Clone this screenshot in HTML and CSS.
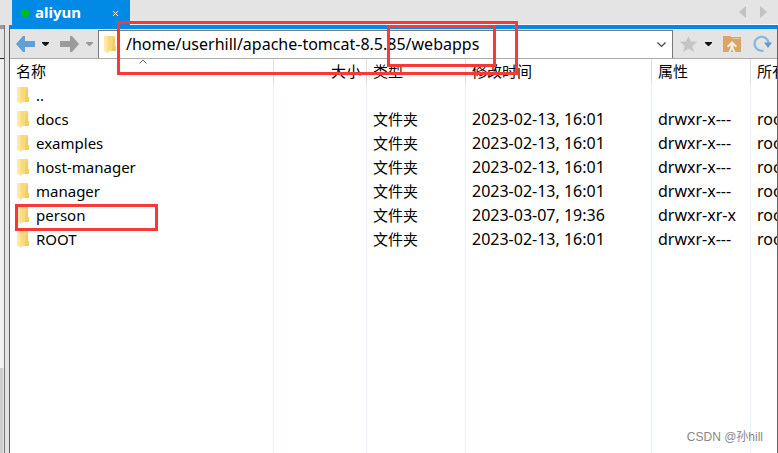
FILE: index.html
```html
<!DOCTYPE html>
<html lang="zh-CN">
<head>
<meta charset="utf-8">
<title>aliyun</title>
<link rel="stylesheet" href="styles.css">
</head>
<body>
<svg class="defs" aria-hidden="true">
  <symbol id="folder" viewBox="0 0 12 17">
    <path d="M3 0h8v10h1v5H3z" fill="#f9d978"/>
    <path d="M9 2h2v8h1v5H8z" fill="#f2cb66"/>
    <path d="M0 0h3l1.500 3v14L0 15z" fill="#ffe9a6"/>
    <path d="M3 1l1.500 2v14L3 16z" fill="#f8dd8c"/>
  </symbol>
</svg>
<div class="app">
  <aside class="neighbor"><div class="neighbor-top"></div><div class="neighbor-bar"></div><div class="neighbor-body"></div><div class="neighbor-scroll"></div></aside>
  <main class="pane">
    <header class="tabs">
      <div class="tab"><span class="dot"></span><span class="tab-name">aliyun</span>
        <button class="tab-close" aria-label="关闭"><svg width="5" height="5" viewBox="0 0 5 5"><path d="M0 0l5 5M5 0L0 5" stroke="#fff" fill="none"/></svg></button>
      </div>
      <div class="tab-nav">
        <button aria-label="上一个"><svg width="7" height="12" viewBox="0 0 7 12"><path d="M7 0v12L0 6z" fill="#c2c2c2"/></svg></button>
        <button aria-label="下一个"><svg width="7" height="12" viewBox="0 0 7 12"><path d="M0 0v12l7-6z" fill="#c2c2c2"/></svg></button>
      </div>
    </header>
    <div class="content">
      <div class="toolbar">
        <div class="history">
          <button aria-label="后退"><svg width="19" height="16" viewBox="0 0 19 16"><path d="M0 8l7-8h2v5h10v6H9v5H7z" fill="#629fd5"/></svg></button>
          <button aria-label="后退历史"><svg width="7" height="4" viewBox="0 0 7 4"><path d="M0 0h7v1L4 4H3L0 1z" fill="#111"/></svg></button>
          <button class="forward" aria-label="前进"><svg width="19" height="16" viewBox="0 0 19 16"><path d="M19 8l-7-8h-2v5H0v6h10v5h2z" fill="#9b9b9b"/></svg></button>
          <button aria-label="前进历史"><svg width="7" height="4" viewBox="0 0 7 4"><path d="M0 0h7v1L4 4H3L0 1z" fill="#999"/></svg></button>
        </div>
        <div class="address">
          <svg class="folder" width="12" height="17"><use href="#folder"/></svg>
          <input aria-label="路径" type="text" value="/home/userhill/apache-tomcat-8.5.85/webapps">
          <button aria-label="展开"><svg width="9" height="6" viewBox="0 0 9 6"><path d="M.5.5l4 4 4-4" stroke="#444" fill="none" stroke-width="1.200"/></svg></button>
        </div>
        <div class="tools">
          <button aria-label="收藏"><svg width="17" height="16" viewBox="0 0 17 16"><path d="M8.500 0l2.300 5.500 6.200.3-4.700 4.100 1.700 6.100-5.500-3.300L3 16l1.700-6.100L0 5.800l6.200-.3z" fill="#c4c4c4"/></svg></button>
          <button class="fav-menu" aria-label="收藏列表"><svg width="7" height="4" viewBox="0 0 7 4"><path d="M0 0h7v1L4 4H3L0 1z" fill="#111"/></svg></button>
          <button class="up" aria-label="上级目录"><svg width="18" height="16" viewBox="0 0 18 16"><path d="M0 0h7l1 1h10v15H0z" fill="#d9a566"/><path d="M9 2h8v1H10z" fill="#edc896"/><path d="M9 5l5 5-1.200 1.500-2.300-2.300V12l2 4h-2L9 13.500 7.500 16h-2l2-4V9.200l-2.300 2.300L4 10z" fill="#f4ede4"/></svg></button>
          <button class="refresh" aria-label="刷新"><svg width="19" height="18" viewBox="0 0 19 18"><path d="M10.500 15.500A7 7 0 1 1 15.500 8" stroke="#85b6df" stroke-width="2.200" fill="none"/><path d="M11 7.500h8L15 13z" fill="#5d9dd5"/></svg></button>
        </div>
      </div>
      <div class="list">
        <svg class="sort" width="8" height="5" viewBox="0 0 8 5"><path d="M.5 4.500L4 1l3.500 3.500" stroke="#666" fill="none"/></svg>
        <table>
          <colgroup><col class="c-name"><col class="c-size"><col class="c-type"><col class="c-time"><col class="c-attr"><col class="c-owner"></colgroup>
          <thead><tr><th>名称</th><th class="size">大小</th><th>类型</th><th>修改时间</th><th>属性</th><th>所有者</th></tr></thead>
          <tbody>
            <tr><td><svg class="folder" width="12" height="17"><use href="#folder"/></svg>..</td><td></td><td></td><td></td><td></td><td></td></tr>
            <tr><td><svg class="folder" width="12" height="17"><use href="#folder"/></svg>docs</td><td></td><td>文件夹</td><td class="data">2023-02-13, 16:01</td><td class="data">drwxr-x---</td><td class="data">root</td></tr>
            <tr><td><svg class="folder" width="12" height="17"><use href="#folder"/></svg>examples</td><td></td><td>文件夹</td><td class="data">2023-02-13, 16:01</td><td class="data">drwxr-x---</td><td class="data">root</td></tr>
            <tr><td><svg class="folder" width="12" height="17"><use href="#folder"/></svg>host-manager</td><td></td><td>文件夹</td><td class="data">2023-02-13, 16:01</td><td class="data">drwxr-x---</td><td class="data">root</td></tr>
            <tr><td><svg class="folder" width="12" height="17"><use href="#folder"/></svg>manager</td><td></td><td>文件夹</td><td class="data">2023-02-13, 16:01</td><td class="data">drwxr-x---</td><td class="data">root</td></tr>
            <tr><td><svg class="folder" width="12" height="17"><use href="#folder"/></svg>person</td><td></td><td>文件夹</td><td class="data">2023-03-07, 19:36</td><td class="data">drwxr-xr-x</td><td class="data">root</td></tr>
            <tr><td><svg class="folder" width="12" height="17"><use href="#folder"/></svg>ROOT</td><td></td><td>文件夹</td><td class="data">2023-02-13, 16:01</td><td class="data">drwxr-x---</td><td class="data">root</td></tr>
            <tr class="filler"><td></td><td></td><td></td><td></td><td></td><td></td></tr>
          </tbody>
        </table>
      </div>
    </div>
  </main>
  <div class="mark mark-path"></div>
  <div class="mark mark-dir"></div>
  <div class="mark mark-row"></div>
  <div class="watermark">CSDN @孙hill</div>
</div>
</body>
</html>
```
FILE: styles.css
```css
* { box-sizing: border-box; }
body {
  margin: 0;
  background: #e4e4e4;
  color: #000;
  font: 15px/24px "Noto Sans", "Noto Sans CJK SC", sans-serif;
}
button {
  display: flex;
  padding: 0;
  border: 0;
  background: none;
}
svg { display: block; }
.defs { position: absolute; width: 0; height: 0; }
.app {
  position: relative;
  display: flex;
  height: 100vh;
  overflow: hidden;
}

.neighbor {
  display: flex;
  flex-direction: column;
  flex: 0 0 5px;
  margin: 25px 4px 0 0;
  border-right: 1px solid #777;
}
.neighbor-top { height: 4px; background: #999; }
.neighbor-bar { height: 30px; border-bottom: 1px solid #222; background: #e4e4e4; }
.neighbor-body { flex: 309; background: #f0f0f0; }
.neighbor-scroll { flex: 85; margin-right: 1px; background: #cdcdcd; }

.pane { display: flex; flex-direction: column; flex: 1; min-width: 0; }
.tabs {
  display: flex;
  height: 25px;
  padding-left: 3px;
}
.tab {
  display: flex;
  align-items: center;
  width: 118px;
  padding: 0 12px 0 9px;
  background: #008ae6;
  color: #fff;
}
.dot { width: 8px; height: 8px; margin-right: 6px; border-radius: 50%; background: #00bd17; }
.tab-name { padding-bottom: 2px; font-weight: 700; }
.tab-close { margin-left: auto; padding-top: 2px; }
.tab-nav {
  display: flex;
  flex: 1;
  align-items: center;
  justify-content: flex-end;
  gap: 14px;
  padding-right: 11px;
  border-bottom: 1px solid #f8f8f8;
}

.content {
  display: flex;
  flex-direction: column;
  flex: 1;
  min-height: 0;
  border-top: 4px solid #008ae6;
  border-left: 1px solid #0a73b8;
  border-right: 1px solid #666;
  background: #fff;
}
.toolbar {
  display: flex;
  flex: 0 0 30px;
  border-bottom: 1px solid #aaa;
  background: #e4e4e4;
}
.history { display: flex; align-items: center; gap: 7px; width: 88px; padding-left: 6px; }
.forward { margin-left: 4px; }
.address {
  display: flex;
  align-items: center;
  flex: 1;
  min-width: 0;
  margin-top: 1px;
  padding: 0 6px 0 5px;
  border: 1px solid #777;
  border-bottom: 0;
  background: #fff;
}
.address input {
  flex: 1;
  min-width: 0;
  height: 26px;
  margin-left: 10px;
  padding: 0 0 2px;
  border: 0;
  outline: 0;
  background: none;
  color: inherit;
  font: inherit;
  font-size: 16px;
}
.tools { display: flex; align-items: center; width: 104px; padding-left: 7px; }
.fav-menu { margin-left: 8px; }
.up { margin-left: 11px; }
.refresh { margin-left: 12px; }

.list { position: relative; flex: 1; min-height: 0; overflow: hidden; }
.sort { position: absolute; left: 129px; top: 0; }
table { width: 100%; height: 100%; border-collapse: separate; border-spacing: 0; table-layout: fixed; }
.c-size { width: 93px; }
.c-type { width: 99px; }
.c-time { width: 186px; }
.c-attr { width: 99px; }
.c-owner { width: 26px; }
th, td {
  height: 24px;
  padding: 0 0 0 6px;
  border-right: 1px solid #e5f0fb;
  font-weight: 400;
  text-align: left;
  white-space: nowrap;
  overflow: hidden;
}
th { border-color: #dedede; }
th.size { padding-right: 5px; text-align: right; }
th:last-child, td:last-child { border-right: 0; }
.data { font-size: 16px; }
.filler td { height: auto; }
td .folder { display: inline-block; margin: 0 7px 0 1px; vertical-align: -3px; }

.mark { position: absolute; border: 3px solid #fb3838; }
.mark-path { left: 117px; top: 21px; width: 401px; height: 54px; }
.mark-dir { left: 387px; top: 25px; width: 109px; height: 42px; }
.mark-row { left: 15px; top: 204px; width: 143px; height: 27px; }
.watermark {
  position: absolute;
  right: 15px;
  bottom: 4px;
  color: #888;
  font: 12px/24px "Liberation Sans", "Noto Sans CJK SC", sans-serif;
}
```
